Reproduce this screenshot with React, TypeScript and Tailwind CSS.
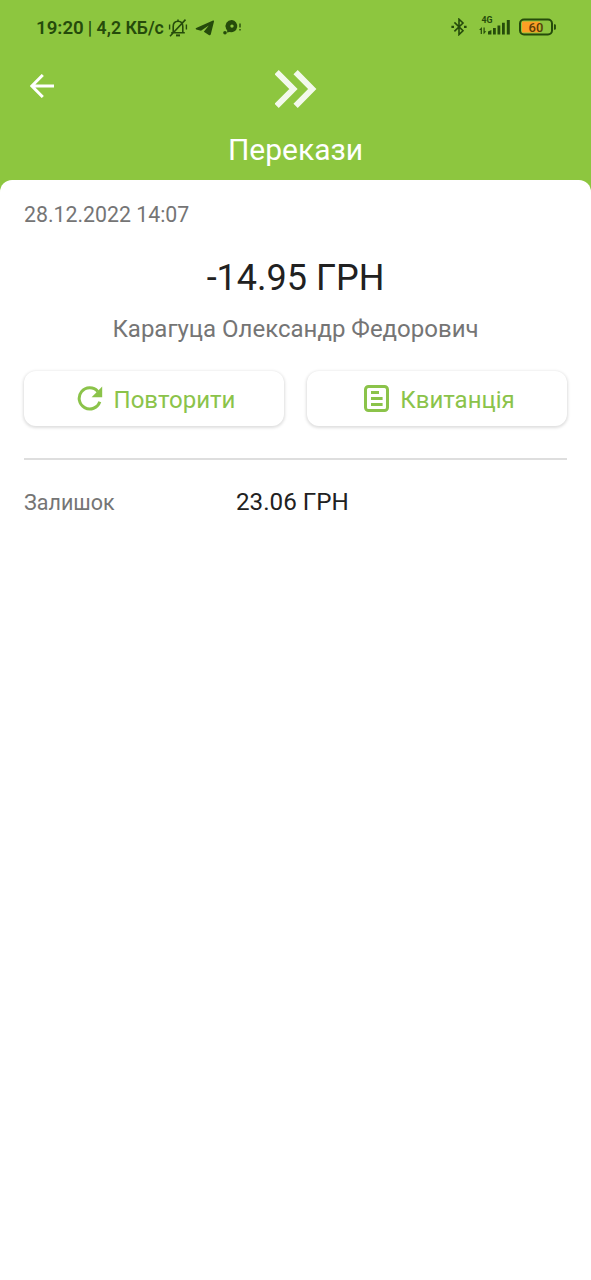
import React from 'react';

const BellOffIcon = () => (
  <svg className="w-5 h-5" viewBox="0 0 20 20" fill="none" stroke="currentColor" strokeWidth="1.6">
    <path d="M5.2 14V8.5C5.2 5.2 7.2 3.2 10 3.2s4.8 2 4.8 5.3V14M3.2 14.8h13.6M10 3.2V1.6M2 18.2 17.5 1.6" />
    <path d="M8 17.4h4" strokeWidth="2" />
    <path d="M1.6 6.5v5M18.4 6.5v5" strokeWidth="1.4" />
  </svg>
);

const TelegramIcon = () => (
  <svg className="w-5 h-[18px]" viewBox="0 0 20 18" fill="currentColor">
    <path d="M18 1.6 1.2 9c-.7.4-.7 1.1 0 1.4l4.8 1.4 7.8-5.2-5 6.2 5 3.2c.9.5 1.8.3 2-.7L19 2.5c.2-.8-.2-1.2-1-.9Z" />
  </svg>
);

const CallIcon = () => (
  <svg className="w-[18px] h-[18px]" viewBox="0 0 18 18" fill="currentColor">
    <path
      fillRule="evenodd"
      d="M9 .9a6.2 6.2 0 1 1-2.2 12.2L4 13.6A3 3 0 0 0 3.2 10 6.2 6.2 0 0 1 9 .9Zm0 4.5a1.7 1.7 0 1 0 0 3.4 1.7 1.7 0 0 0 0-3.4Z"
    />
    <circle cx="2" cy="13.8" r="1.8" />
    <path d="M16.3 4.5h1.4v4h-1.4zM16.3 10h1.4v1.6h-1.4z" />
  </svg>
);

const BluetoothIcon = () => (
  <svg className="w-4 h-[18px]" viewBox="0 0 16 18" fill="none" stroke="currentColor" strokeWidth="1.6">
    <path d="m3.4 4.4 8.6 8.4L8 16.6V1.2L12 5l-8.6 8.4" />
    <path d="M.4 8.9h2.6M13 8.9h2.6" strokeWidth="2.2" />
  </svg>
);

const SignalIcon = () => (
  <svg className="w-8 h-[22px]" viewBox="0 0 32 22" fill="currentColor">
    <text x="2.5" y="8" fontSize="8.8" fontWeight="700" fontFamily="Roboto, sans-serif">
      4G
    </text>
    <path d="M1.7 13h1.2v6H1.7zM.1 15l2.8-3v3zM4.5 12.4h1.2v6H4.5zM4.5 16.2h2.8l-2.8 3z" />
    <path d="M9 19.5v-3l3.4-1.4v4.4zM14 13h2.8v6.5H14zM18.5 10.5h2.8v9h-2.8zM23 7.8h2.8v11.7H23zM27.8 5h3v14.5h-3z" />
  </svg>
);

const BatteryIcon = () => (
  <svg className="w-[38px] h-[18px]" viewBox="0 0 38 18">
    <rect x="3" y="3.5" width="18" height="11" fill="#fb9f25" />
    <rect x="1" y="1.5" width="32" height="15" rx="4" fill="none" stroke="#254b0b" strokeWidth="2" />
    <path d="M35 6.2h.6a1.3 1.3 0 0 1 1.3 1.3v3a1.3 1.3 0 0 1-1.3 1.3H35z" fill="#254b0b" />
    <text x="17" y="13.6" fontSize="13" fontWeight="500" textAnchor="middle" fill="#5a3d08" fontFamily="Roboto, sans-serif">
      60
    </text>
  </svg>
);

const ArrowBackIcon = () => (
  <svg className="w-6 h-6" viewBox="0 0 24 24" fill="none" stroke="currentColor" strokeWidth="3">
    <path d="M24 12H2M12.8 1 1.8 12l11 11" />
  </svg>
);

const TransferIcon = () => (
  <svg className="w-[42px] h-[38px]" viewBox="0 0 42 38" fill="none" stroke="currentColor" strokeWidth="6">
    <path d="m1.6 2.2 16.8 16.8L1.6 35.8M20.6 2.2 37.2 19 20.6 35.8" />
  </svg>
);

const RepeatIcon = () => (
  <svg className="w-[26px] h-[26px]" viewBox="0 0 26 26" fill="none" stroke="currentColor" strokeWidth="3">
    <path d="M20.8 6.4A10.6 10.6 0 1 0 22.8 16.8" />
    <path d="M25.2 1.6v10.6H14.6z" fill="currentColor" stroke="none" />
  </svg>
);

const ReceiptIcon = () => (
  <svg className="w-[26px] h-7" viewBox="0 0 26 28" fill="none" stroke="currentColor" strokeWidth="3">
    <rect x="2.5" y="2.5" width="22" height="24" rx="3" />
    <path d="M8 8.5h8M8 14.5h11.6M8 20.5h11.6" strokeWidth="2.8" />
  </svg>
);

type ActionButtonProps = {
  icon: React.ReactNode;
  label: string;
};

const ActionButton: React.FC<ActionButtonProps> = ({ icon, label }) => (
  <button className="flex-1 h-[55px] pb-px pl-1 rounded-xl bg-white flex items-center justify-center text-2xl text-[#8bc34a] shadow-[0_1px_3px_1px_rgba(0,0,0,0.13)]">
    {icon}
    <span className="ml-[11px] pt-[3px]">{label}</span>
  </button>
);

export default function App() {
  return (
    <div className="flex flex-col min-h-[1280px] bg-[#8dc63f] font-[Roboto,sans-serif]">
      {/* Status bar */}
      <div className="h-14 pl-9 pr-[34px] flex items-center text-[#254b0b] whitespace-nowrap">
        <span className="text-[18.7px] font-semibold">19:20</span>
        <span className="ml-1 text-[17.7px] font-semibold">| 4,2 КБ/с</span>
        <div className="ml-1 mb-px flex items-center">
          <BellOffIcon />
          <div className="ml-[7px]">
            <TelegramIcon />
          </div>
          <div className="ml-2">
            <CallIcon />
          </div>
        </div>
        <div className="ml-auto mb-0.5 flex items-center">
          <BluetoothIcon />
          <div className="ml-3 mb-0.5">
            <SignalIcon />
          </div>
          <div className="ml-2">
            <BatteryIcon />
          </div>
        </div>
      </div>

      {/* Header */}
      <header className="h-[124px] grid grid-cols-3 content-start text-white">
        <button className="w-6 h-6 ml-[30px] mt-[18px]" aria-label="Назад">
          <ArrowBackIcon />
        </button>
        <div className="mt-[14px] flex justify-center opacity-90">
          <TransferIcon />
        </div>
        <h1 className="col-span-3 mt-6 text-center text-[30px] leading-9">Перекази</h1>
      </header>

      {/* Transaction details */}
      <main className="flex-1 rounded-t-xl bg-white px-6 pt-[23px] text-[#757575]">
        <div className="text-[21.3px] leading-6">28.12.2022 14:07</div>
        <div className="mt-[29px] text-center text-4xl leading-[44px] text-[#212121]">-14.95 ГРН</div>
        <div className="mt-[15px] text-center text-2xl leading-7">Карагуца Олександр Федорович</div>

        <div className="mt-7 flex gap-[23px]">
          <ActionButton icon={<RepeatIcon />} label="Повторити" />
          <ActionButton icon={<ReceiptIcon />} label="Квитанція" />
        </div>

        <div className="mt-8 h-0.5 bg-[#dedede]" />

        <div className="mt-[27px] flex items-center leading-7">
          <span className="w-[212px] pt-0.5 text-[21.5px]">Залишок</span>
          <span className="text-[24.2px] leading-7 text-[#212121]">23.06 ГРН</span>
        </div>
      </main>
    </div>
  );
}
